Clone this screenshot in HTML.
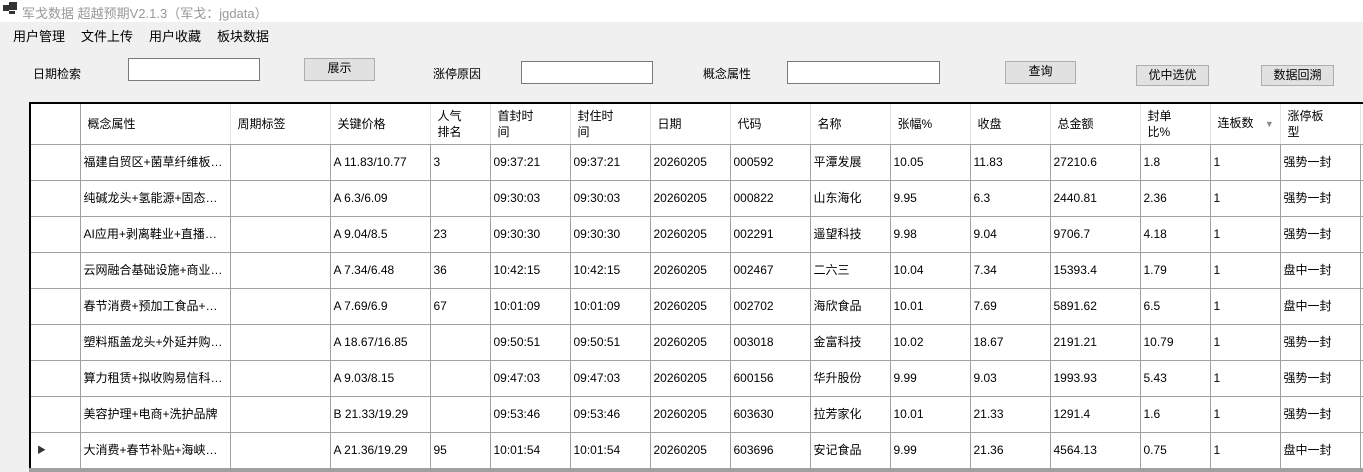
<!DOCTYPE html>
<html><head><meta charset="utf-8"><style>
*{margin:0;padding:0;box-sizing:border-box}
body{width:1363px;height:472px;overflow:hidden;background:#f0f0f0;font-family:"Liberation Sans","Microsoft YaHei","Noto Sans CJK SC",sans-serif;font-size:12px;color:#000;position:relative}
.a{position:absolute;white-space:nowrap}
.title{left:0;top:0;width:1363px;height:22px;background:#fff}
.inp{position:absolute;background:#fff;border:1px solid #7a7a7a}
.btn{position:absolute;background:#e1e1e1;border:1px solid #adadad;text-align:center;line-height:19px}
.grid{position:absolute;left:29px;top:102px;width:1334px;height:370px;background:#fff;border-left:2px solid #000;border-top:2px solid #000;overflow:hidden}
table{border-collapse:collapse;table-layout:fixed;position:absolute;left:0;top:0;width:1332px}
td{height:36px;border-right:1px solid #a0a0a0;border-bottom:1px solid #a0a0a0;padding-left:3px;white-space:nowrap;overflow:hidden;vertical-align:middle;line-height:15px}
tr.h td{height:40px;border-right:1px solid #e3e3e3;border-bottom:1px solid #a0a0a0;padding-left:7px;line-height:16px}
tr.h td:first-child{border-right:1px solid #a0a0a0}
.bot{position:absolute;left:29px;top:468px;width:1334px;height:4px;background:#a0a0a0}
</style></head><body>
<div class="a title"></div>
<div class="a" style="left:3px;top:5px;width:6px;height:6px;background:#333"></div>
<div class="a" style="left:9px;top:2px;width:8px;height:8px;background:#333"></div>
<div class="a" style="left:9px;top:11px;width:6px;height:3px;background:#333"></div>
<div class="a" style="left:22px;top:3px;font-size:13px;color:#999">军戈数据 超越预期V2.1.3（军戈：jgdata）</div>
<div class="a" style="left:13px;top:26px;font-size:13px">用户管理</div>
<div class="a" style="left:81px;top:26px;font-size:13px">文件上传</div>
<div class="a" style="left:149px;top:26px;font-size:13px">用户收藏</div>
<div class="a" style="left:217px;top:26px;font-size:13px">板块数据</div>

<div class="a" style="left:33px;top:65px">日期检索</div>
<div class="inp" style="left:128px;top:58px;width:132px;height:23px"></div>
<div class="btn" style="left:304px;top:58px;width:71px;height:23px">展示</div>
<div class="a" style="left:433px;top:65px">涨停原因</div>
<div class="inp" style="left:521px;top:61px;width:132px;height:23px"></div>
<div class="a" style="left:703px;top:65px">概念属性</div>
<div class="inp" style="left:787px;top:61px;width:153px;height:23px"></div>
<div class="btn" style="left:1005px;top:61px;width:71px;height:23px">查询</div>
<div class="btn" style="left:1136px;top:65px;width:73px;height:21px">优中选优</div>
<div class="btn" style="left:1261px;top:65px;width:73px;height:21px">数据回溯</div>

<div class="grid">
<table>
<colgroup><col style="width:49px"><col style="width:150px"><col style="width:100px"><col style="width:100px"><col style="width:60px"><col style="width:80px"><col style="width:80px"><col style="width:80px"><col style="width:80px"><col style="width:80px"><col style="width:80px"><col style="width:80px"><col style="width:90px"><col style="width:70px"><col style="width:70px"><col style="width:80px"><col style="width:3px"></colgroup>
<tr class="h"><td></td><td>概念属性</td><td>周期标签</td><td>关键价格</td><td>人气<br>排名</td><td>首封时<br>间</td><td>封住时<br>间</td><td>日期</td><td>代码</td><td>名称</td><td>张幅%</td><td>收盘</td><td>总金额</td><td>封单<br>比%</td><td>连板数 <span style="color:#888;font-size:9px;margin-left:8px">▼</span></td><td>涨停板<br>型</td><td></td></tr>
<tr><td></td><td>福建自贸区+菌草纤维板…</td><td></td><td>A 11.83/10.77</td><td>3</td><td>09:37:21</td><td>09:37:21</td><td>20260205</td><td>000592</td><td>平潭发展</td><td>10.05</td><td>11.83</td><td>27210.6</td><td>1.8</td><td>1</td><td>强势一封</td><td></td></tr>
<tr><td></td><td>纯碱龙头+氢能源+固态…</td><td></td><td>A 6.3/6.09</td><td></td><td>09:30:03</td><td>09:30:03</td><td>20260205</td><td>000822</td><td>山东海化</td><td>9.95</td><td>6.3</td><td>2440.81</td><td>2.36</td><td>1</td><td>强势一封</td><td></td></tr>
<tr><td></td><td>AI应用+剥离鞋业+直播…</td><td></td><td>A 9.04/8.5</td><td>23</td><td>09:30:30</td><td>09:30:30</td><td>20260205</td><td>002291</td><td>遥望科技</td><td>9.98</td><td>9.04</td><td>9706.7</td><td>4.18</td><td>1</td><td>强势一封</td><td></td></tr>
<tr><td></td><td>云网融合基础设施+商业…</td><td></td><td>A 7.34/6.48</td><td>36</td><td>10:42:15</td><td>10:42:15</td><td>20260205</td><td>002467</td><td>二六三</td><td>10.04</td><td>7.34</td><td>15393.4</td><td>1.79</td><td>1</td><td>盘中一封</td><td></td></tr>
<tr><td></td><td>春节消费+预加工食品+…</td><td></td><td>A 7.69/6.9</td><td>67</td><td>10:01:09</td><td>10:01:09</td><td>20260205</td><td>002702</td><td>海欣食品</td><td>10.01</td><td>7.69</td><td>5891.62</td><td>6.5</td><td>1</td><td>盘中一封</td><td></td></tr>
<tr><td></td><td>塑料瓶盖龙头+外延并购…</td><td></td><td>A 18.67/16.85</td><td></td><td>09:50:51</td><td>09:50:51</td><td>20260205</td><td>003018</td><td>金富科技</td><td>10.02</td><td>18.67</td><td>2191.21</td><td>10.79</td><td>1</td><td>强势一封</td><td></td></tr>
<tr><td></td><td>算力租赁+拟收购易信科…</td><td></td><td>A 9.03/8.15</td><td></td><td>09:47:03</td><td>09:47:03</td><td>20260205</td><td>600156</td><td>华升股份</td><td>9.99</td><td>9.03</td><td>1993.93</td><td>5.43</td><td>1</td><td>强势一封</td><td></td></tr>
<tr><td></td><td>美容护理+电商+洗护品牌</td><td></td><td>B 21.33/19.29</td><td></td><td>09:53:46</td><td>09:53:46</td><td>20260205</td><td>603630</td><td>拉芳家化</td><td>10.01</td><td>21.33</td><td>1291.4</td><td>1.6</td><td>1</td><td>强势一封</td><td></td></tr>
<tr><td style="padding-left:6px;font-size:9px;color:#333">▶</td><td>大消费+春节补贴+海峡…</td><td></td><td>A 21.36/19.29</td><td>95</td><td>10:01:54</td><td>10:01:54</td><td>20260205</td><td>603696</td><td>安记食品</td><td>9.99</td><td>21.36</td><td>4564.13</td><td>0.75</td><td>1</td><td>盘中一封</td><td></td></tr>
</table>
</div>
<div class="bot"></div>
</body></html>
